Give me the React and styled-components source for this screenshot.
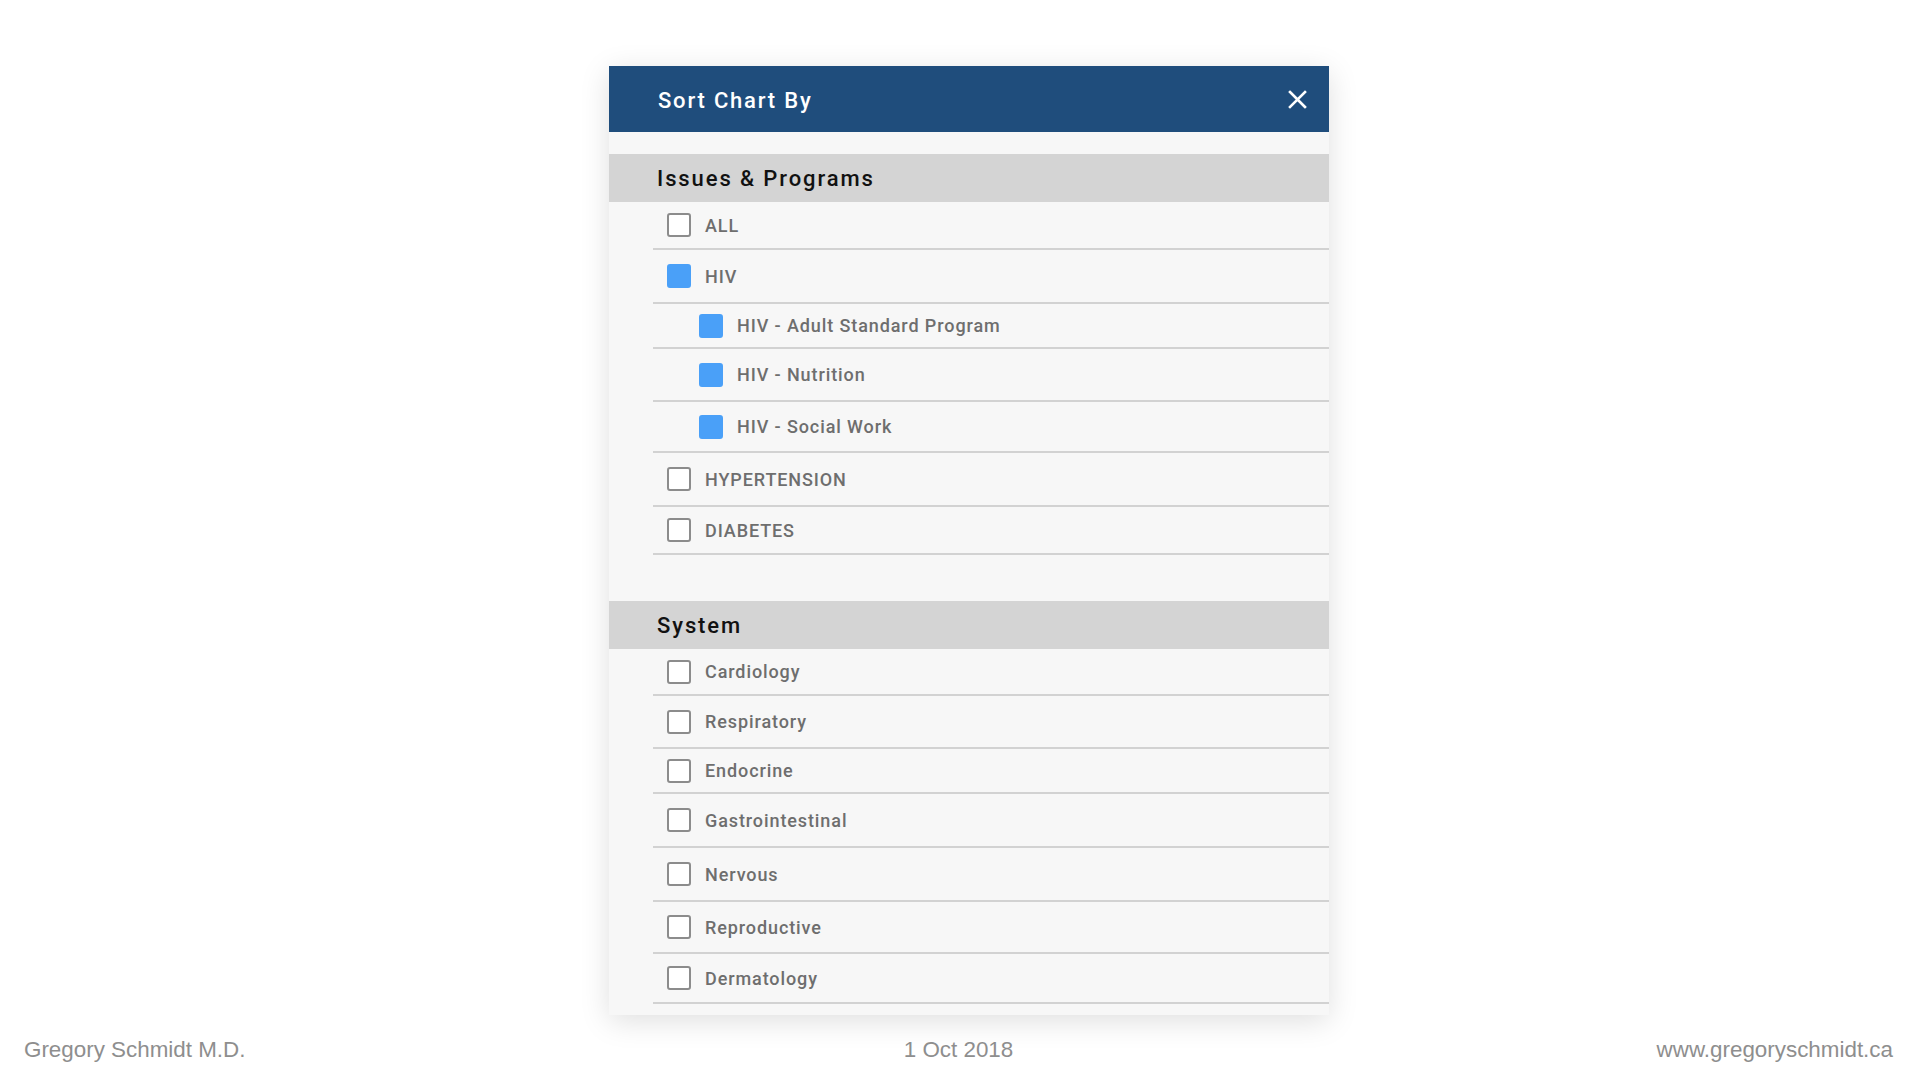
import React from 'react'
import styled, { createGlobalStyle } from 'styled-components'

const sections = [
  {
    title: 'Issues & Programs',
    items: [
      { label: 'ALL', h: 48 },
      { label: 'HIV', checked: true, h: 54 },
      { label: 'HIV - Adult Standard Program', checked: true, sub: true, h: 45 },
      { label: 'HIV - Nutrition', checked: true, sub: true, h: 53 },
      { label: 'HIV - Social Work', checked: true, sub: true, h: 51 },
      { label: 'HYPERTENSION', h: 54 },
      { label: 'DIABETES', h: 48 },
    ],
  },
  {
    title: 'System',
    items: [
      { label: 'Cardiology', h: 47 },
      { label: 'Respiratory', h: 53 },
      { label: 'Endocrine', h: 45 },
      { label: 'Gastrointestinal', h: 54 },
      { label: 'Nervous', h: 54 },
      { label: 'Reproductive', h: 52 },
      { label: 'Dermatology', h: 50 },
    ],
  },
]

const App = () =>
  <Page>
    <GlobalStyle />
    <Panel>
      <Header>
        <Title>Sort Chart By</Title>
        <Close aria-label="close">
          <svg width="19" height="19" viewBox="0 0 19 19">
            <path d="M2 2 L17 17 M17 2 L2 17" stroke="#fff" strokeWidth="2.6" strokeLinecap="square" />
          </svg>
        </Close>
      </Header>
      <Body>
        {sections.map(s =>
          <Section key={s.title}>
            <SectionTitle>{s.title}</SectionTitle>
            <List>
              {s.items.map(item =>
                <Row key={item.label} $sub={item.sub} $h={item.h}>
                  <Box $checked={item.checked} />
                  <Label>{item.label}</Label>
                </Row>
              )}
            </List>
          </Section>
        )}
      </Body>
    </Panel>
    <Footer>
      <FootText>Gregory Schmidt M.D.</FootText>
      <FootText $align="center">1 Oct 2018</FootText>
      <FootText $align="right">www.gregoryschmidt.ca</FootText>
    </Footer>
  </Page>

export default App

const GlobalStyle = createGlobalStyle`
  html, body { margin: 0; padding: 0; background: #fff; }
  body { font-family: Roboto, "Liberation Sans", sans-serif; }
`

const Page = styled.div`
  height: 1080px;
  display: flex;
  flex-direction: column;
  overflow: hidden;
`

const Panel = styled.div`
  width: 720px;
  margin: 66px 0 0 609px;
  background: #f7f7f7;
  box-shadow: 0 6px 28px rgba(0, 0, 0, 0.13);
  padding-bottom: 11px;
`

const Header = styled.div`
  height: 66px;
  background: #1f4d7c;
  display: flex;
  align-items: center;
  justify-content: space-between;
  padding: 0 22px 0 49px;
`

const Title = styled.div`
  color: #fff;
  font-size: 22px;
  font-weight: 500;
  letter-spacing: 1.8px;
  padding-top: 2px;
`

const Close = styled.div`
  width: 19px;
  height: 19px;
  display: flex;
  margin-top: 1px;
`

const Body = styled.div`
  padding-top: 22px;
  display: flex;
  flex-direction: column;
  gap: 46px;
`

const Section = styled.div``

const SectionTitle = styled.div`
  height: 48px;
  background: #d4d4d4;
  display: flex;
  align-items: center;
  padding-left: 48px;
  font-size: 22px;
  font-weight: 500;
  letter-spacing: 1.9px;
  color: #111;
`

const List = styled.div`
  margin-left: 44px;
`

const Row = styled.div`
  height: ${p => p.$h || 50}px;
  box-sizing: border-box;
  border-bottom: 2px solid #d2d2d2;
  display: flex;
  align-items: center;
  gap: 14px;
  padding-left: ${p => (p.$sub ? '46px' : '14px')};
`

const Box = styled.span`
  width: 24px;
  height: 24px;
  box-sizing: border-box;
  border-radius: 3px;
  flex-shrink: 0;
  background: ${p => (p.$checked ? '#4aa0f8' : '#fff')};
  border: 2px solid ${p => (p.$checked ? '#4aa0f8' : '#8c8c8c')};
`

const Label = styled.span`
  font-size: 18px;
  font-weight: 500;
  letter-spacing: 0.9px;
  color: #6e6e6e;
`

const Footer = styled.div`
  margin-top: auto;
  height: 43px;
  display: grid;
  grid-template-columns: 1fr auto 1fr;
  align-items: start;
  padding: 0 27px 0 24px;
`

const FootText = styled.div`
  font-family: "Liberation Sans", Arial, sans-serif;
  font-size: 22.4px;
  color: #8e8e8e;
  text-align: ${p => p.$align || 'left'};
`
